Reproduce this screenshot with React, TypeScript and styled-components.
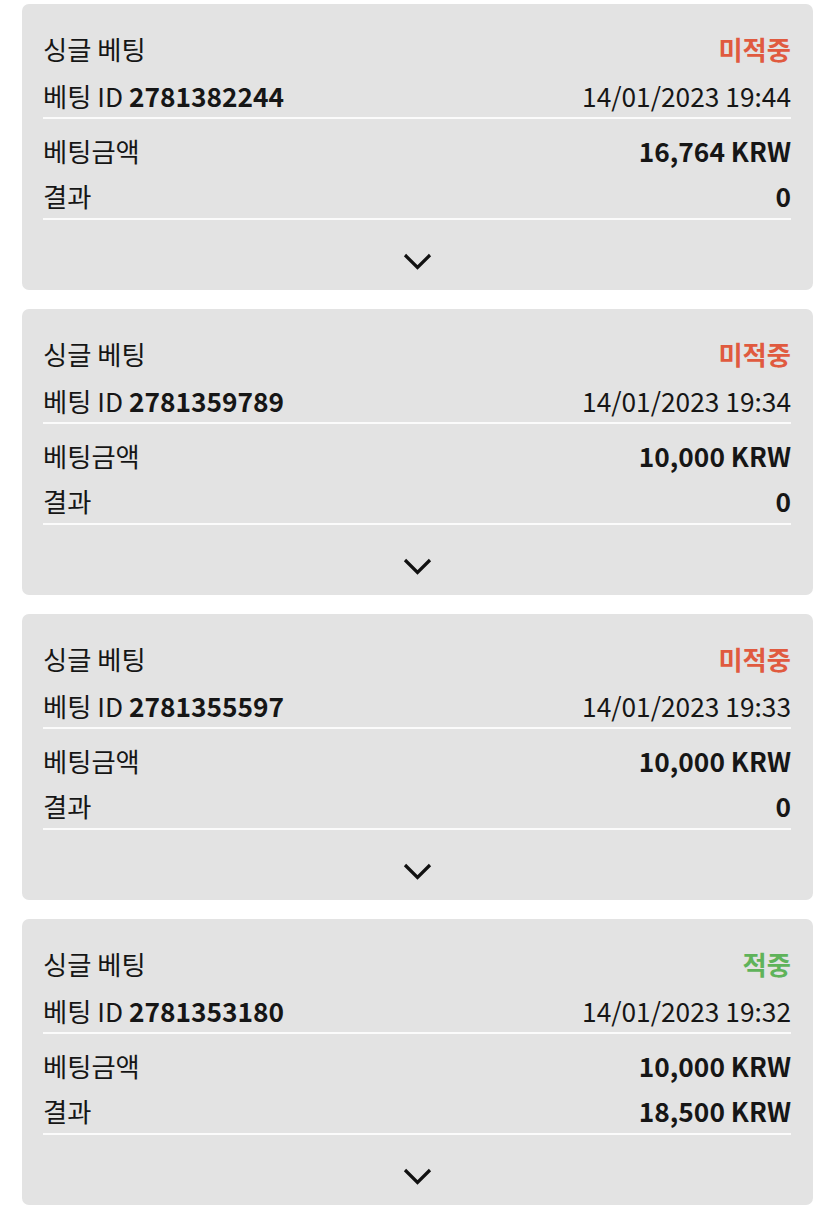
import styled, { createGlobalStyle } from "styled-components";

interface Bet {
  id: string;
  won: boolean;
  date: string;
  amount: string;
  result: string;
}

const bets: Bet[] = [
  { id: "2781382244", won: false, date: "14/01/2023 19:44", amount: "16,764 KRW", result: "0" },
  { id: "2781359789", won: false, date: "14/01/2023 19:34", amount: "10,000 KRW", result: "0" },
  { id: "2781355597", won: false, date: "14/01/2023 19:33", amount: "10,000 KRW", result: "0" },
  { id: "2781353180", won: true, date: "14/01/2023 19:32", amount: "10,000 KRW", result: "18,500 KRW" },
];

const GlobalStyle = createGlobalStyle`
  html, body {
    margin: 0;
    padding: 0;
    background: #fff;
  }
  body {
    font-family: "Noto Sans CJK KR", "Noto Sans", sans-serif;
    color: #161616;
  }
`;

function BetCard({ bet }: { bet: Bet }) {
  return (
    <Card>
      <Group className="top">
        <Row>
          <Label>싱글 베팅</Label>
          <Status $won={bet.won}>{bet.won ? "적중" : "미적중"}</Status>
        </Row>
        <Row>
          <Label>
            베팅 ID <strong>{bet.id}</strong>
          </Label>
          <Label>{bet.date}</Label>
        </Row>
      </Group>
      <Divider />
      <Group className="middle">
        <Row>
          <Label>베팅금액</Label>
          <Value>{bet.amount}</Value>
        </Row>
        <Row>
          <Label>결과</Label>
          <Value>{bet.result}</Value>
        </Row>
      </Group>
      <Divider />
      <Footer>
        <svg width="29" height="17" viewBox="0 0 29 17" fill="none">
          <path d="M2 2 L14.5 14.5 L27 2" stroke="#111" strokeWidth="3.2" />
        </svg>
      </Footer>
    </Card>
  );
}

export default function App() {
  return (
    <>
      <GlobalStyle />
      <List>
        {bets.map((bet) => (
          <BetCard key={bet.id} bet={bet} />
        ))}
      </List>
    </>
  );
}

const List = styled.div`
  display: flex;
  flex-direction: column;
  gap: 19px;
  padding: 4px 22px 0 22px;
`;

const Card = styled.div`
  background: #e3e3e3;
  border-radius: 7px;
  padding: 22px 22px 0 21px;
  height: 286px;
  box-sizing: border-box;
  display: flex;
  flex-direction: column;

  .top {
    gap: 3px;
  }

  .middle {
    padding: 9px 0 1px;
    gap: 1px;
  }
`;

const Group = styled.div`
  display: flex;
  flex-direction: column;
`;

const Row = styled.div`
  display: flex;
  align-items: center;
  justify-content: space-between;
  height: 44px;
`;

const Label = styled.span`
  font-size: 26.3px;
  font-weight: 400;
  white-space: nowrap;

  strong {
    font-weight: 700;
  }
`;

const Value = styled.span`
  font-size: 26.3px;
  font-weight: 700;
  white-space: nowrap;
`;

const Status = styled.span<{ $won: boolean }>`
  font-size: 26.3px;
  font-weight: 700;
  color: ${(p) => (p.$won ? "#5fb35a" : "#e05a3f")};
`;

const Divider = styled.div`
  height: 2px;
  background: #fbfbfb;
`;

const Footer = styled.div`
  flex: 1;
  display: flex;
  justify-content: center;
  padding-top: 33px;
`;
